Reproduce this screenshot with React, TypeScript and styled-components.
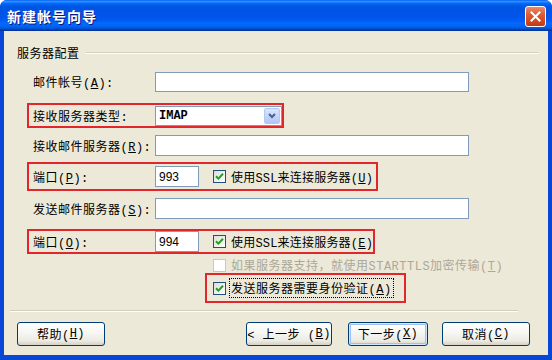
import styled, { createGlobalStyle } from "styled-components";

const GlobalStyle = createGlobalStyle`
    html, body {
        margin: 0;
        padding: 0;
        background: #ffffff;
    }
    body {
        width: 552px;
        height: 360px;
        overflow: hidden;
    }
`;

const uiFont = `"Liberation Mono", "Noto Sans CJK SC", monospace`;

const Window = styled.div`
    width: 552px;
    height: 360px;
    display: flex;
    flex-direction: column;
    background: #0846d8;
    border-radius: 7px 7px 0 0;
    overflow: hidden;
`;

const TitleBar = styled.div`
    height: 31px;
    flex-shrink: 0;
    display: flex;
    align-items: center;
    justify-content: space-between;
    padding: 0 6px 0 7px;
    box-sizing: border-box;
    background: linear-gradient(
        to bottom,
        #0058ee 0%,
        #3593ff 4%,
        #288eff 6%,
        #127dff 8%,
        #036ffc 10%,
        #0262ee 14%,
        #0057e5 20%,
        #0054e3 24%,
        #0055eb 56%,
        #005bf5 66%,
        #026afe 76%,
        #0062ef 86%,
        #0052d6 92%,
        #0040ab 96%,
        #003092 100%
    );
`;

const Title = styled.span`
    color: #ffffff;
    font-family: "Noto Sans CJK SC", sans-serif;
    font-size: 14px;
    font-weight: 700;
    letter-spacing: 1px;
    text-shadow: 1px 1px 0 #0a1883;
    margin-top: 1px;
`;

const CloseButton = styled.div`
    width: 21px;
    height: 21px;
    margin-top: 2px;
    box-sizing: border-box;
    border: 1px solid #ffffff;
    border-radius: 3px;
    background: linear-gradient(to bottom, #e98a6a 0%, #e05a32 40%, #d2441c 80%, #c2361a 100%);
    display: flex;
    align-items: center;
    justify-content: center;
`;

const Body = styled.div`
    flex: 1;
    margin: 0 4px 5px;
    background: #ece9d8;
    display: flex;
    flex-direction: column;
    font-family: ${uiFont};
    font-size: 12px;
    letter-spacing: 0.5px;
    color: #000000;
`;

const GroupHeader = styled.div`
    height: 14px;
    margin-top: 15px;
    padding-left: 13px;
    display: flex;
    align-items: center;
    gap: 6px;
`;

const GroupLabel = styled.span`
    white-space: nowrap;
`;

const Etched = styled.div<{ $right: number }>`
    flex: 1;
    height: 0;
    border-top: 1px solid #d0d0bf;
    border-bottom: 1px solid #ffffff;
    margin-right: ${(p) => p.$right}px;
`;

const Separator = styled(Etched)`
    flex: none;
    margin: 7px ${(p) => p.$right}px 0 6px;
`;

const Form = styled.div`
    display: flex;
    flex-direction: column;
    padding-left: 23px;
`;

const Row = styled.div<{ $h: number; $mt: number; $indent?: number; $pl?: number; $pr?: number; $mark?: boolean }>`
    display: flex;
    align-items: center;
    height: ${(p) => p.$h}px;
    margin-top: ${(p) => p.$mt}px;
    margin-left: ${(p) => p.$indent ?? 0}px;
    padding-left: ${(p) => p.$pl ?? 6}px;
    padding-right: ${(p) => p.$pr ?? 0}px;
    width: ${(p) => (p.$mark ? "fit-content" : "auto")};
    box-sizing: border-box;
    outline: ${(p) => (p.$mark ? "2px solid #e3262b" : "none")};
    outline-offset: -2px;
    white-space: nowrap;
`;

const Label = styled.span`
    width: 122px;
    flex-shrink: 0;
`;

const TextInput = styled.div<{ $w: number; $h?: number }>`
    width: ${(p) => p.$w}px;
    height: ${(p) => p.$h ?? 21}px;
    box-sizing: border-box;
    border: 1px solid #7f9db9;
    background: #ffffff;
    display: flex;
    align-items: center;
    padding-left: 3px;
    font-family: "Liberation Sans", sans-serif;
    font-size: 12px;
    letter-spacing: 0;
`;

const Select = styled.div`
    width: 127px;
    height: 20px;
    box-sizing: border-box;
    border: 1px solid #7f9db9;
    background: #ffffff;
    display: flex;
    align-items: center;
    justify-content: space-between;
    padding: 1px 1px 1px 3px;
`;

const SelectValue = styled.span`
    font-weight: 700;
    letter-spacing: 0;
`;

const DropButton = styled.div`
    width: 16px;
    height: 16px;
    box-sizing: border-box;
    border: 1px solid #b4c8f6;
    border-radius: 2px;
    background: linear-gradient(to bottom, #dce6fd 0%, #c4d4fb 50%, #b2c6f6 100%);
    display: flex;
    align-items: center;
    justify-content: center;
`;

const Check = styled.div<{ $disabled?: boolean; $ml?: number }>`
    width: 13px;
    height: 13px;
    flex-shrink: 0;
    box-sizing: border-box;
    margin-left: ${(p) => p.$ml ?? 0}px;
    margin-right: 3px;
    border: 1px solid ${(p) => (p.$disabled ? "#cac8bb" : "#1c5180")};
    background: ${(p) => (p.$disabled ? "#ffffff" : "linear-gradient(135deg, #dcdcd7 0%, #ffffff 100%)")};
    display: flex;
    align-items: center;
    justify-content: center;
`;

const CheckText = styled.span<{ $disabled?: boolean; $focus?: boolean; $tight?: boolean }>`
    color: ${(p) => (p.$disabled ? "#aca899" : "#000000")};
    border: 1px dotted ${(p) => (p.$focus ? "#000000" : "transparent")};
    padding: 0 1px;
    letter-spacing: ${(p) => (p.$tight ? "0.2px" : "0.5px")};
`;

const ButtonBar = styled.div`
    display: flex;
    align-items: center;
    margin-top: 10px;
    padding: 0 18px 0 13px;
`;

const Spacer = styled.div`
    flex: 1;
`;

const Button = styled.div<{ $w: number; $ml?: number; $default?: boolean }>`
    width: ${(p) => p.$w}px;
    height: 24px;
    margin-left: ${(p) => p.$ml ?? 0}px;
    box-sizing: border-box;
    border: 1px solid #003c74;
    border-radius: 3px;
    background: linear-gradient(to bottom, #ffffff 0%, #f6f6f2 45%, #ecebe4 80%, #d6d0c5 100%);
    box-shadow: ${(p) => (p.$default ? "inset 0 0 0 1px #cee7ff, inset 0 0 0 2px #a3bef0" : "none")};
    display: flex;
    align-items: center;
    justify-content: center;
    white-space: nowrap;
`;

const U = styled.span`
    text-decoration: underline;
`;

const Tick = () => (
    <svg width="9" height="9" viewBox="0 0 9 9">
        <path d="M1 4.2 L3.4 6.6 L8 1.8" fill="none" stroke="#21a121" strokeWidth="2" />
    </svg>
);

function App() {
    return (
        <>
            <GlobalStyle />
            <Window>
                <TitleBar>
                    <Title>新建帐号向导</Title>
                    <CloseButton>
                        <svg width="11" height="11" viewBox="0 0 11 11">
                            <path d="M1.5 1.5 L9.5 9.5 M9.5 1.5 L1.5 9.5" stroke="#ffffff" strokeWidth="2" strokeLinecap="square" />
                        </svg>
                    </CloseButton>
                </TitleBar>
                <Body>
                    <GroupHeader>
                        <GroupLabel>服务器配置</GroupLabel>
                        <Etched $right={10} />
                    </GroupHeader>
                    <Form>
                        <Row $h={22} $mt={11}>
                            <Label>邮件帐号(<U>A</U>):</Label>
                            <TextInput $w={314} $h={20} />
                        </Row>
                        <Row $h={25} $mt={10} $pr={2} $mark>
                            <Label>接收服务器类型:</Label>
                            <Select>
                                <SelectValue>IMAP</SelectValue>
                                <DropButton>
                                    <svg width="8" height="6" viewBox="0 0 8 6">
                                        <path d="M1 1 L4 4 L7 1" fill="none" stroke="#4d6185" strokeWidth="2" />
                                    </svg>
                                </DropButton>
                            </Select>
                        </Row>
                        <Row $h={23} $mt={6}>
                            <Label>接收邮件服务器(<U>R</U>):</Label>
                            <TextInput $w={314} />
                        </Row>
                        <Row $h={29} $mt={5} $pr={3} $mark>
                            <Label>端口(<U>P</U>):</Label>
                            <TextInput $w={44}>993</TextInput>
                            <Check $ml={14}>
                                <Tick />
                            </Check>
                            <CheckText $tight>使用SSL来连接服务器(<U>U</U>)</CheckText>
                        </Row>
                        <Row $h={23} $mt={6}>
                            <Label>发送邮件服务器(<U>S</U>):</Label>
                            <TextInput $w={314} />
                        </Row>
                        <Row $h={25} $mt={9} $pr={0} $mark>
                            <Label>端口(<U>O</U>):</Label>
                            <TextInput $w={44}>994</TextInput>
                            <Check $ml={14}>
                                <Tick />
                            </Check>
                            <CheckText $tight>使用SSL来连接服务器(<U>E</U>)</CheckText>
                        </Row>
                        <Row $h={16} $mt={3} $indent={180}>
                            <Check $disabled />
                            <CheckText $disabled>如果服务器支持，就使用STARTTLS加密传输(<U>T</U>)</CheckText>
                        </Row>
                        <Row $h={30} $mt={0} $indent={178} $pl={8} $pr={12} $mark>
                            <Check>
                                <Tick />
                            </Check>
                            <CheckText $focus>发送服务器需要身份验证(<U>A</U>)</CheckText>
                        </Row>
                    </Form>
                    <Separator $right={30} />
                    <ButtonBar>
                        <Button $w={88}>帮助(<U>H</U>)</Button>
                        <Spacer />
                        <Button $w={86}>&lt; 上一步 (<U>B</U>)</Button>
                        <Button $w={80} $ml={16} $default>下一步(<U>X</U>)</Button>
                        <Button $w={88} $ml={14}>取消(<U>C</U>)</Button>
                    </ButtonBar>
                </Body>
            </Window>
        </>
    );
}

export default App;
